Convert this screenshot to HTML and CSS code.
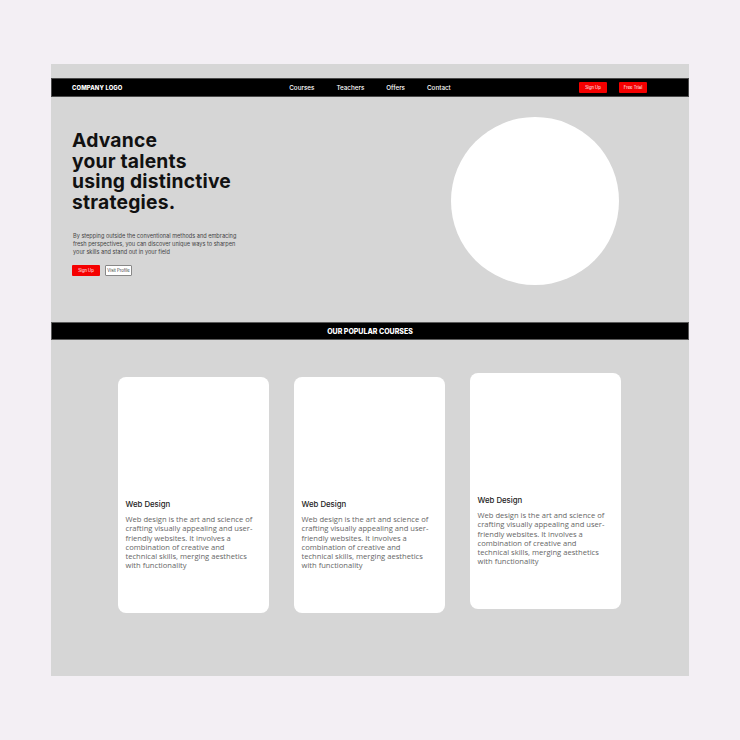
FILE: index.html
```html
<!DOCTYPE html>
<html lang="en">
<head>
<meta charset="utf-8">
<title>Courses</title>
<link rel="stylesheet" href="styles.css">
</head>
<body>
<div class="panel">
  <nav class="nav">
    <div class="logo">COMPANY LOGO</div>
    <ul class="links">
      <li>Courses</li>
      <li>Teachers</li>
      <li>Offers</li>
      <li>Contact</li>
    </ul>
    <div class="nav-actions">
      <span class="btn btn-red">Sign Up</span>
      <span class="btn btn-red">Free Trial</span>
    </div>
  </nav>
  <section class="hero">
    <div class="hero-text">
      <h1 class="hero-title">Advance<br>your talents<br>using distinctive<br>strategies.</h1>
      <p class="hero-desc">By stepping outside the conventional methods and embracing fresh perspectives, you can discover unique ways to sharpen your skills and stand out in your field</p>
      <div class="hero-actions">
        <span class="btn btn-red btn-small">Sign Up</span>
        <span class="btn btn-outline btn-small">Visit Profile</span>
      </div>
    </div>
    <div class="circle"></div>
  </section>
  <div class="section-bar">OUR POPULAR COURSES</div>
  <section class="cards">
    <article class="card card-low">
      <h3 class="card-title">Web Design</h3>
      <p class="card-desc">Web design is the art and science of crafting visually appealing and user-friendly websites. It involves a combination of creative and technical skills, merging aesthetics with functionality</p>
    </article>
    <article class="card card-low">
      <h3 class="card-title">Web Design</h3>
      <p class="card-desc">Web design is the art and science of crafting visually appealing and user-friendly websites. It involves a combination of creative and technical skills, merging aesthetics with functionality</p>
    </article>
    <article class="card">
      <h3 class="card-title">Web Design</h3>
      <p class="card-desc">Web design is the art and science of crafting visually appealing and user-friendly websites. It involves a combination of creative and technical skills, merging aesthetics with functionality</p>
    </article>
  </section>
</div>
</body>
</html>
```
FILE: styles.css
```css
* { box-sizing: border-box; }
body {
  margin: 0;
  background: #f3eff4;
  font-family: Inter, "Open Sans", "Liberation Sans", sans-serif;
  color: #111;
}
.panel {
  margin: 64px 0 0 51px;
  width: 638px;
  height: 612px;
  background: #d6d6d6;
  padding-top: 14px;
}
.nav {
  height: 19px;
  background: #000;
  border: 1px solid #4a4a4a;
  display: grid;
  grid-template-columns: 1fr auto 1fr;
  align-items: center;
  color: #fff;
}
.logo {
  padding-left: 20px;
  font-weight: 800;
  font-size: 5.9px;
  letter-spacing: 0.1px;
}
.links {
  list-style: none;
  margin: 0;
  padding: 0;
  display: flex;
  gap: 22px;
  font-size: 6.3px;
  font-weight: 500;
}
.nav-actions {
  justify-self: end;
  padding-right: 41px;
  display: flex;
  gap: 12px;
}
.btn {
  display: inline-flex;
  align-items: center;
  justify-content: center;
  width: 28px;
  height: 11px;
  font-size: 4.2px;
  border-radius: 1px;
}
.btn-red {
  background: #f50000;
  color: #fff;
}
.btn-outline {
  background: #fff;
  color: #333;
  border: 1px solid #888;
  width: 27px;
}
.hero {
  display: flex;
  justify-content: space-between;
  padding: 20px 70px 0 21px;
  height: 225px;
}
.hero-text {
  padding-top: 13px;
}
.hero-title {
  margin: 0;
  font-size: 19.3px;
  line-height: 20.7px;
  font-weight: 700;
  letter-spacing: 0.2px;
  color: #111;
}
.hero-desc {
  margin: 19px 0 0 1px;
  width: 172px;
  font-size: 5.6px;
  line-height: 8px;
  color: #444;
}
.hero-actions {
  margin-top: 9px;
  display: flex;
  gap: 5px;
}
.circle {
  width: 168px;
  height: 168px;
  border-radius: 50%;
  background: #fff;
}
.section-bar {
  height: 18px;
  background: #000;
  border: 1px solid #5a5a5a;
  color: #fff;
  font-weight: 800;
  font-size: 7px;
  display: flex;
  align-items: center;
  justify-content: center;
}
.cards {
  display: flex;
  justify-content: center;
  align-items: flex-start;
  gap: 25px;
  padding: 33px 2px 0 0;
}
.card {
  width: 151px;
  height: 236px;
  background: #fff;
  border-radius: 8px;
  padding: 122px 8px 0;
}
.card-low { margin-top: 4px; }
.card-title {
  margin: 0;
  font-size: 7.8px;
  font-weight: 500;
  color: #222;
}
.card-desc {
  margin: 6px 0 0;
  max-width: 130px;
  font-family: "Open Sans", Inter, sans-serif;
  font-size: 7.6px;
  line-height: 9.3px;
  color: #666;
}
```
